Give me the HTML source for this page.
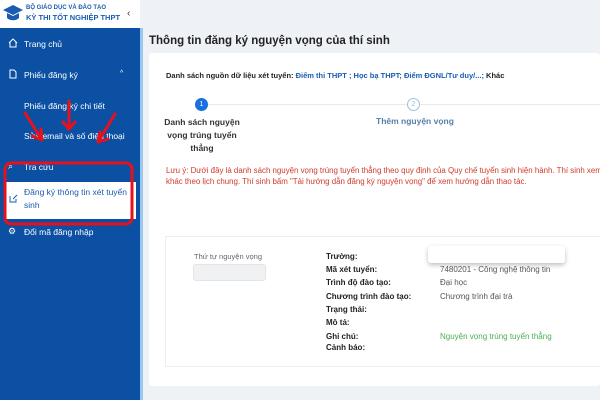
<!DOCTYPE html><html><head><meta charset="utf-8"><style>
*{margin:0;padding:0;box-sizing:border-box}
body{width:600px;height:400px;overflow:hidden;font-family:"Liberation Sans",sans-serif;background:#eef1f6;position:relative}
.abs{position:absolute}
#side{left:0;top:28px;width:140px;height:372px;background:#0b50a3;color:#fff;font-size:8.5px}
#hdr{left:0;top:0;width:140px;height:28px;background:#fff}
.it{position:absolute;left:24px;white-space:nowrap}
b{font-weight:bold}
.lbl{position:absolute;left:326px;font-size:8px;font-weight:bold;color:#222}
.val{position:absolute;left:440px;font-size:8px;color:#555}
</style></head><body>
<div id="hdr" class="abs">
<svg class="abs" style="left:2px;top:3px" width="22" height="20" viewBox="0 0 22 20"><path d="M1 7L11 2L21 7L11 12Z" fill="#1a5cb0"/><path d="M5 10v5c3 3 9 3 12 0v-5l-6 3z" fill="#1a5cb0"/></svg>
<div class="abs" style="left:26px;top:5px;font-size:6px;color:#1a5cb0;font-weight:bold">BỘ GIÁO DỤC VÀ ĐÀO TẠO</div>
<div class="abs" style="left:26px;top:13px;font-size:7.5px;color:#1a5cb0;font-weight:bold">KỲ THI TỐT NGHIỆP THPT</div>
<div class="abs" style="left:127px;top:8px;font-size:10px;color:#333">‹</div>
</div>
<div class="abs" style="left:140px;top:28px;width:3px;height:372px;background:#9cc8f0"></div>
<div id="side" class="abs">
<div class="it" style="top:11px">Trang chủ</div>
<svg class="abs" style="left:8px;top:10px" width="10" height="10" viewBox="0 0 10 10" fill="none" stroke="#fff" stroke-width="1"><path d="M1 5L5 1L9 5M2 4v5h6V4"/></svg>
<div class="it" style="top:42px">Phiếu đăng ký</div>
<svg class="abs" style="left:8px;top:41px" width="10" height="10" viewBox="0 0 10 10" fill="none" stroke="#fff" stroke-width="1"><path d="M2 1h4l2 2v6H2z"/></svg>
<div class="abs" style="left:120px;top:42px;font-size:7px">^</div>
<div class="it" style="top:73px">Phiếu đăng ký chi tiết</div>
<div class="it" style="top:103px">Sửa email và số điện thoại</div>
<div class="it" style="top:134px">Tra cứu</div>
<div class="abs" style="left:8px;top:133px;font-size:9px">⌕</div>
<div class="abs" style="left:4px;top:154px;width:132px;height:37px;background:#fff"></div>
<div class="it" style="top:158px;color:#1a5cb0;line-height:13px">Đăng ký thông tin xét tuyển<br>sinh</div>
<svg class="abs" style="left:9px;top:166px" width="9" height="9" viewBox="0 0 9 9" fill="none" stroke="#1a5cb0" stroke-width="1"><path d="M1 2v6h6V5M4 5l4-4"/></svg>
<div class="it" style="top:199px">Đổi mã đăng nhập</div>
<div class="abs" style="left:8px;top:198px;font-size:9px">⚙</div>
</div>
<svg class="abs" style="left:0;top:0" width="140" height="400" fill="none" stroke="#e8101a" stroke-width="3" stroke-linecap="round">
<rect x="5" y="163" width="127" height="61" rx="6"/>
<path d="M25 113L42 140M42 140l-1-11M42 140l-10-4"/>
<path d="M69 101v28M69 129l-6-7M69 129l6-7"/>
<path d="M115 114L98 142M98 142l2-10M98 142l10-3"/>
</svg>
<div class="abs" style="left:149px;top:35px;font-size:11.5px;font-weight:bold;color:#222">Thông tin đăng ký nguyện vọng của thí sinh</div>
<div class="abs" style="left:149px;top:53px;width:451px;height:333px;background:#fff;border-radius:3px"></div>
<div class="abs" style="left:166px;top:71px;font-size:7.5px;font-weight:bold;color:#222;white-space:nowrap">Danh sách nguồn dữ liệu xét tuyển: <span style="color:#1a5cb0">Điểm thi THPT ; Học bạ THPT; Điểm ĐGNL/Tư duy/...;</span> Khác</div>
<div class="abs" style="left:208px;top:104px;width:392px;height:1px;background:#e6e9ee"></div>
<div class="abs" style="left:195px;top:98px;width:13px;height:13px;border-radius:50%;background:#1a6fe0;color:#fff;font-size:7px;text-align:center;line-height:13px">1</div>
<div class="abs" style="left:407px;top:98px;width:13px;height:13px;border-radius:50%;background:#fff;border:1px solid #9cc0e0;color:#9cc0e0;font-size:7px;text-align:center;line-height:11px">2</div>
<div class="abs" style="left:160px;top:116px;width:84px;font-size:8.5px;font-weight:bold;color:#333;text-align:center;line-height:13px">Danh sách nguyện vọng trúng tuyển thẳng</div>
<div class="abs" style="left:376px;top:116px;font-size:8.5px;font-weight:bold;color:#5580a8">Thêm nguyện vọng</div>
<div class="abs" style="left:166px;top:165px;font-size:7.9px;color:#d23a2a;line-height:11px;white-space:nowrap">Lưu ý: Dưới đây là danh sách nguyện vọng trúng tuyển thẳng theo quy định của Quy chế tuyển sinh hiện hành. Thí sinh xem<br>khác theo lịch chung. Thí sinh bấm "Tải hướng dẫn đăng ký nguyện vọng" để xem hướng dẫn thao tác.</div>
<div class="abs" style="left:165px;top:236px;width:435px;height:131px;background:#fff;border:1px solid #eceef2;border-right:none"></div>
<div class="abs" style="left:194px;top:252px;font-size:7.5px;color:#666">Thứ tự nguyện vọng</div>
<div class="abs" style="left:193px;top:264px;width:73px;height:17px;background:#f0f1f3;border:1px solid #e2e4e8;border-radius:3px"></div>
<div class="abs" style="left:428px;top:246px;width:137px;height:17px;background:#fff;border-radius:3px;box-shadow:0 2px 5px rgba(0,0,0,.25)"></div>
<div class="lbl" style="top:252px">Trường:</div>
<div class="lbl" style="top:265px">Mã xét tuyển:</div>
<div class="lbl" style="top:278px">Trình độ đào tạo:</div>
<div class="lbl" style="top:292px">Chương trình đào tạo:</div>
<div class="lbl" style="top:305px">Trạng thái:</div>
<div class="lbl" style="top:318px">Mô tả:</div>
<div class="lbl" style="top:332px">Ghi chú:</div>
<div class="lbl" style="top:343px">Cảnh báo:</div>
<div class="val" style="top:265px">7480201 - Công nghệ thông tin</div>
<div class="val" style="top:278px">Đại học</div>
<div class="val" style="top:292px">Chương trình đại trà</div>
<div class="val" style="top:332px;color:#4caf50">Nguyện vọng trúng tuyển thẳng</div>
</body></html>
